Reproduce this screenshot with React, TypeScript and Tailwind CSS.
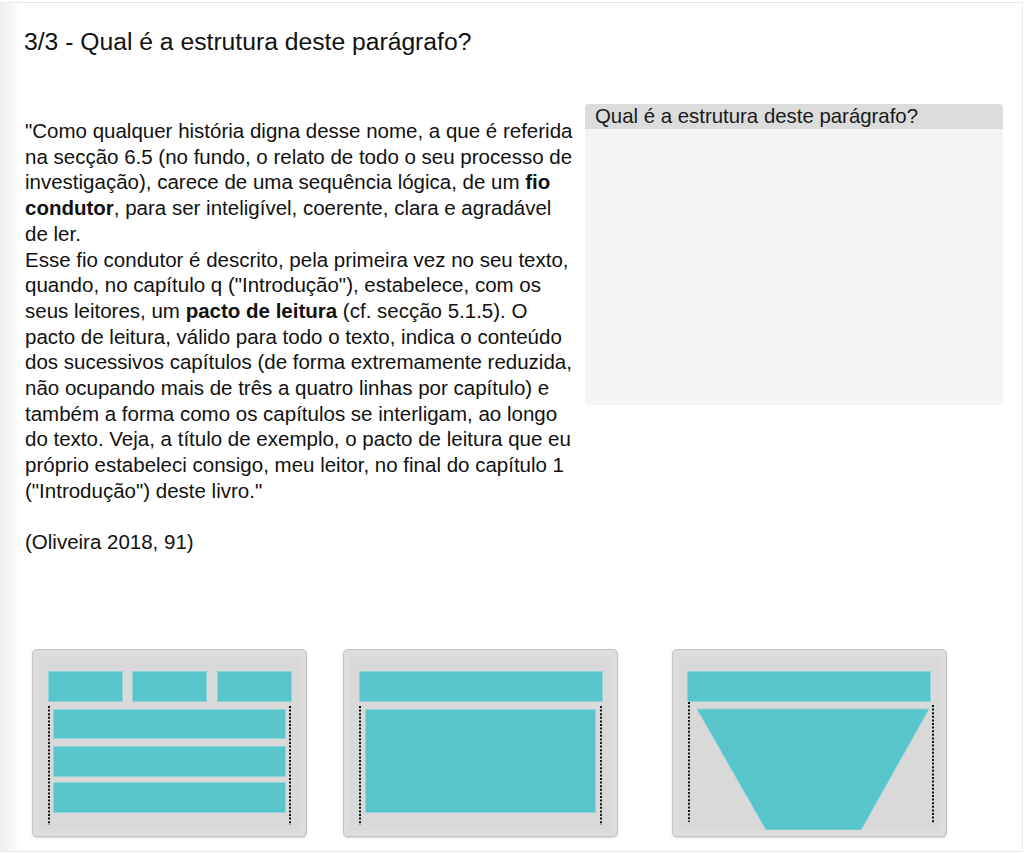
import React from "react";

// ─── Diagram cards ────────────────────────────────────────────────────────────

const TEAL = "#58c4cc";
const EDGE = "#8fd4d9";

function Dots({ x, y1, y2 }: { x: number; y1: number; y2: number }) {
  return (
    <line
      x1={x}
      y1={y1}
      x2={x}
      y2={y2}
      stroke="#111"
      strokeWidth={2}
      strokeDasharray="2 1.6"
    />
  );
}

function Box({ x, y, w, h }: { x: number; y: number; w: number; h: number }) {
  return <rect x={x + 0.5} y={y + 0.5} width={w} height={h} fill={TEAL} stroke={EDGE} strokeWidth={1} />;
}

function Card({ children, className = "" }: { children: React.ReactNode; className?: string }) {
  return (
    <div
      className={`w-[275px] h-[188px] rounded-[5px] border border-[#c3c3c3] bg-[#dddddd] p-[6px] shadow-[0_1px_2px_rgba(0,0,0,0.18)] ${className}`}
    >
      <div className="w-full h-full bg-[#d9d9d9]">
        <svg width={261} height={174} viewBox="0 0 261 174" className="block">
          {children}
        </svg>
      </div>
    </div>
  );
}

// ─── Page ─────────────────────────────────────────────────────────────────────

export default function App() {
  return (
    <div className="min-h-screen bg-white font-['Liberation_Sans',Arial,sans-serif] text-[#111]">
      <div className="mt-[2px] w-[1023px] h-[850px] border-t border-r border-b border-[#ebe8e4] bg-[linear-gradient(to_right,#eeeeee,#ffffff_22px)] flex flex-col">
        <h1 className="pl-[24px] pt-[25px] text-[24.7px] leading-[28px] font-normal">
          3/3 - Qual é a estrutura deste parágrafo?
        </h1>

        <div className="flex mt-[48px]">
          {/* Quoted paragraph */}
          <div className="w-[585px] pl-[25px] pt-[14px]">
            <p className="w-[551px] text-[20.5px] leading-[25.7px]">
              "Como qualquer história digna desse nome, a que é referida na secção 6.5 (no fundo, o relato de todo o
              seu processo de investigação), carece de uma sequência lógica, de um <b>fio condutor</b>, para ser
              inteligível, coerente, clara e agradável de ler.
              <br />
              Esse fio condutor é descrito, pela primeira vez no seu texto, quando, no capítulo q ("Introdução"),
              estabelece, com os seus leitores, um <b>pacto de leitura</b> (cf. secção 5.1.5). O pacto de leitura,
              válido para todo o texto, indica o conteúdo dos sucessivos capítulos (de forma extremamente reduzida,
              não ocupando mais de três a quatro linhas por capítulo) e também a forma como os capítulos se
              interligam, ao longo do texto. Veja, a título de exemplo, o pacto de leitura que eu próprio estabeleci
              consigo, meu leitor, no final do capítulo 1 ("Introdução") deste livro."
              <br />
              <br />
              (Oliveira 2018, 91)
            </p>
          </div>

          {/* Answer drop zone */}
          <div className="w-[418px] h-[301px] rounded-[4px] bg-[#f4f4f4] overflow-hidden">
            <div className="h-[25px] bg-[#dcdcdc] pl-[10px] text-[20.4px] leading-[25px] text-[#1a1a1a]">
              Qual é a estrutura deste parágrafo?
            </div>
          </div>
        </div>

        {/* Structure options */}
        <div className="flex mt-auto pb-[14px]">
          <Card className="ml-[32px]">
            <Box x={9} y={15} w={74} h={30} />
            <Box x={93} y={15} w={74} h={30} />
            <Box x={178} y={15} w={74} h={30} />
            <Box x={14} y={53} w={232} h={29} />
            <Box x={14} y={90} w={232} h={30} />
            <Box x={14} y={126} w={232} h={30} />
            <Dots x={10} y1={50} y2={169} />
            <Dots x={251} y1={50} y2={169} />
          </Card>

          <Card className="ml-[36px]">
            <Box x={9} y={15} w={243} h={30} />
            <Box x={15} y={53} w={230} h={103} />
            <Dots x={10} y1={50} y2={169} />
            <Dots x={251} y1={50} y2={169} />
          </Card>

          <Card className="ml-[54px]">
            <Box x={8} y={15} w={243} h={30} />
            <polygon points="18,53 250,53 182,174 87,174" fill={TEAL} stroke={EDGE} strokeWidth={1} />
            <Dots x={10} y1={46} y2={166} />
            <Dots x={254} y1={49} y2={167} />
          </Card>
        </div>
      </div>
    </div>
  );
}
